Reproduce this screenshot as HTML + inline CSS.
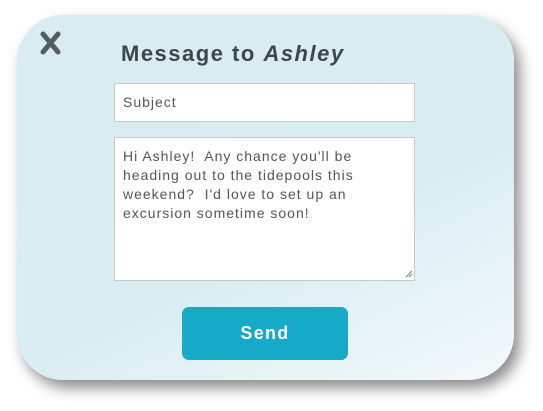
<!DOCTYPE html>
<html><head><style>
body{margin:0;width:543px;height:411px;background:#fff;overflow:hidden;font-family:"Liberation Sans",sans-serif;position:relative}
.card{position:absolute;left:17px;top:15px;width:497px;height:365px;border-radius:46px;background:linear-gradient(155deg,#d9ecf2 0%,#daedf3 60%,#f3f9fb 100%);box-shadow:6px 8px 14px rgba(0,0,0,.45)}
.t{position:absolute;left:121px;top:41px;font-size:22px;font-weight:bold;color:#3b474a;letter-spacing:1.5px}
.in{position:absolute;left:114px;width:301px;background:#fff;border:1px solid #c6c9ca;color:#555;font-size:14px;letter-spacing:1px;box-sizing:border-box}
.btn{position:absolute;left:182px;top:307px;width:166px;height:53px;border-radius:7px;background:#16a9c8;color:#fff;font-size:18px;font-weight:bold;letter-spacing:1.3px;text-align:center;line-height:53px}
</style></head><body>
<div class="card"></div>
<svg style="position:absolute;left:40px;top:31px" width="22" height="24"><path d="M3 3L18 21M18 3L3 21" stroke="#545e60" stroke-width="5" stroke-linecap="round"/></svg>
<div class="t">Message to <i>Ashley</i></div>
<div class="in" style="top:83px;height:39px;padding:10px 0 0 8px">Subject</div>
<div class="in" style="top:137px;height:144px;padding:9px 12px 0 8px;line-height:19px">Hi Ashley!&nbsp; Any chance you'll be heading out to the tidepools this weekend?&nbsp; I'd love to set up an excursion sometime soon!</div>
<svg style="position:absolute;left:405px;top:270px" width="8" height="8"><path d="M7 1L1 7M7 4L4 7" stroke="#777" stroke-width="1"/></svg>
<div class="btn">Send</div>
</body></html>
